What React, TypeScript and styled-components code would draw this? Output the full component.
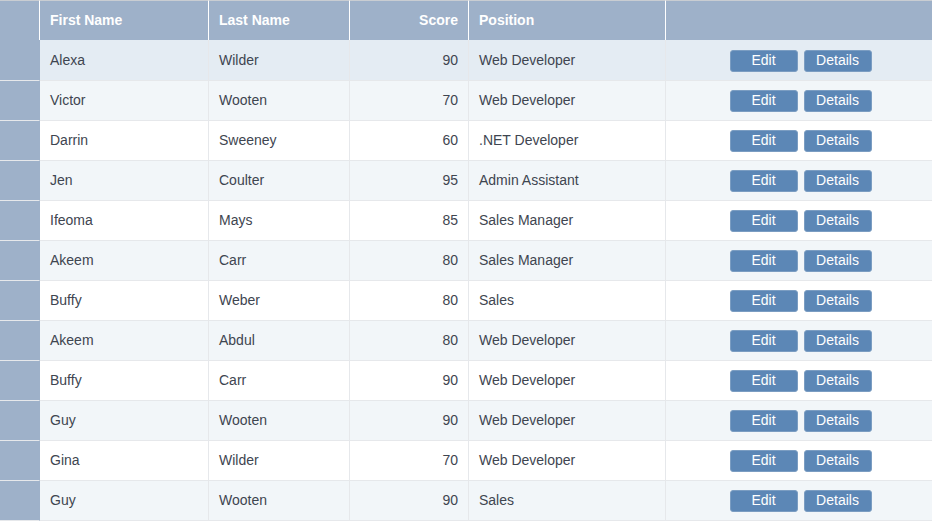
import React from "react";
import styled, { createGlobalStyle } from "styled-components";

const Global = createGlobalStyle`
  html, body { margin: 0; padding: 0; background: #fff; }
  body { font-family: "Liberation Sans", Arial, sans-serif; }
`;

const Grid = styled.table`
  width: 932px;
  border-collapse: separate;
  border-spacing: 0;
  table-layout: fixed;
  font-family: "Liberation Sans", Arial, sans-serif;
  font-size: 14px;
`;

const HeadCell = styled.th<{ $align?: string; $last?: boolean }>`
  padding: 0 10px 2px;
  box-sizing: border-box;
  height: 40px;
  background: #9eb1c9;
  color: #fff;
  font-weight: bold;
  text-align: ${(p) => p.$align || "left"};
  border-top: 1px solid #c9cdd2;
  border-right: ${(p) => (p.$last ? "none" : "1px solid #fff")};
  white-space: nowrap;
  overflow: hidden;
`;

const Row = styled.tr<{ $bg: string; $first?: boolean }>`
  background: ${(p) => p.$bg};
  & > td {
    height: ${(p) => (p.$first ? "41px" : "40px")};
  }
`;

const Cell = styled.td<{ $align?: string; $last?: boolean; $first?: boolean }>`
  box-sizing: border-box;
  padding: ${(p) => (p.$first ? "0 10px 1px" : "0 10px 2px")};
  color: #3e4550;
  text-align: ${(p) => p.$align || "left"};
  border-bottom: 1px solid #e6e8eb;
  border-right: ${(p) => (p.$last ? "none" : "1px solid #e6e8eb")};
  white-space: nowrap;
  overflow: hidden;
`;

const ActionCell = styled.td<{ $first?: boolean }>`
  box-sizing: border-box;
  padding: ${(p) => (p.$first ? "1px 10px 0" : "0 10px")};
  border-bottom: 1px solid #e6e8eb;
`;

const Marker = styled.td`
  box-sizing: border-box;
  padding: 0;
  background: #9eb1c9;
  border-bottom: 1px solid #e6e8eb;
  border-right: 1px solid #9eb1c9;
`;

const Actions = styled.div`
  display: flex;
  justify-content: center;
  gap: 6px;
  padding-left: 3px;
`;

const Button = styled.button`
  width: 68px;
  height: 22px;
  padding: 0 0 1px;
  box-sizing: border-box;
  background: #5c87b6;
  border: 1px solid #7b9dc2;
  border-radius: 3px;
  color: #fff;
  font-family: "Liberation Sans", Arial, sans-serif;
  font-size: 14px;
  line-height: 19px;
  cursor: pointer;
`;

const data: [string, string, number, string][] = [
  ["Alexa", "Wilder", 90, "Web Developer"],
  ["Victor", "Wooten", 70, "Web Developer"],
  ["Darrin", "Sweeney", 60, ".NET Developer"],
  ["Jen", "Coulter", 95, "Admin Assistant"],
  ["Ifeoma", "Mays", 85, "Sales Manager"],
  ["Akeem", "Carr", 80, "Sales Manager"],
  ["Buffy", "Weber", 80, "Sales"],
  ["Akeem", "Abdul", 80, "Web Developer"],
  ["Buffy", "Carr", 90, "Web Developer"],
  ["Guy", "Wooten", 90, "Web Developer"],
  ["Gina", "Wilder", 70, "Web Developer"],
  ["Guy", "Wooten", 90, "Sales"],
];

export default function App() {
  return (
    <>
      <Global />
      <Grid>
        <colgroup>
          <col style={{ width: 40 }} />
          <col style={{ width: 169 }} />
          <col style={{ width: 141 }} />
          <col style={{ width: 119 }} />
          <col style={{ width: 197 }} />
          <col style={{ width: 266 }} />
        </colgroup>
        <thead>
          <tr>
            <HeadCell />
            <HeadCell>First Name</HeadCell>
            <HeadCell>Last Name</HeadCell>
            <HeadCell $align="right">Score</HeadCell>
            <HeadCell>Position</HeadCell>
            <HeadCell $last />
          </tr>
        </thead>
        <tbody>
          {data.map(([first, last, score, pos], i) => {
            const f = i === 0;
            return (
              <Row
                key={i}
                $first={f}
                $bg={f ? "#e4ecf3" : i % 2 === 1 ? "#f2f6f9" : "#ffffff"}
              >
                <Marker />
                <Cell $first={f}>{first}</Cell>
                <Cell $first={f}>{last}</Cell>
                <Cell $first={f} $align="right">{score}</Cell>
                <Cell $first={f}>{pos}</Cell>
                <ActionCell $first={f}>
                  <Actions>
                    <Button>Edit</Button>
                    <Button>Details</Button>
                  </Actions>
                </ActionCell>
              </Row>
            );
          })}
        </tbody>
      </Grid>
    </>
  );
}
